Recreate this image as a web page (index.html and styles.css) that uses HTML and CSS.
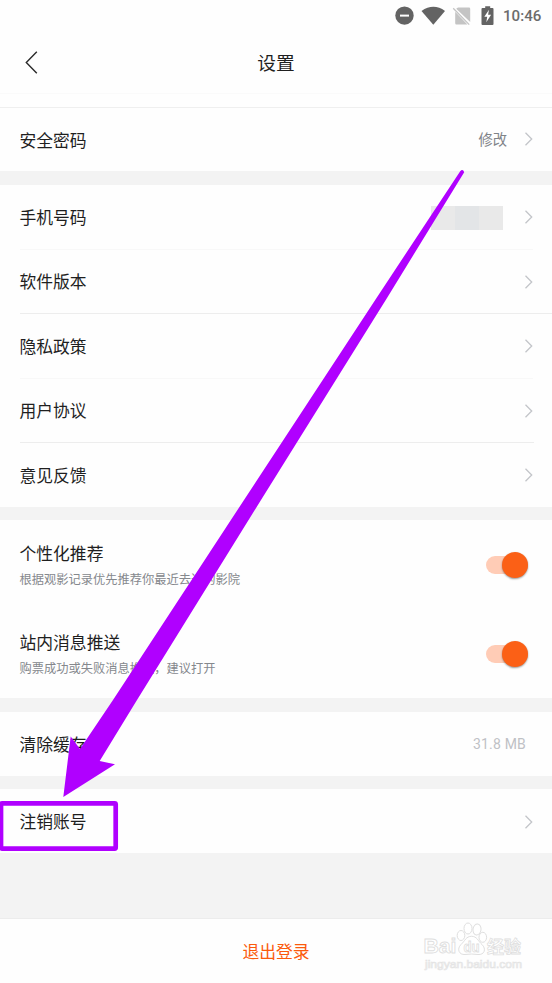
FILE: index.html
```html
<!DOCTYPE html>
<html lang="zh-CN">
<head>
<meta charset="utf-8">
<title>设置</title>
<link rel="stylesheet" href="styles.css">
</head>
<body>
<svg class="defs" width="0" height="0">
  <symbol id="chevron" viewBox="0 0 9 14"><path d="M1.500 .8 7.700 7 1.500 13.200" fill="none" stroke="#c3c5c9" stroke-width="1.3"/></symbol>
</svg>
<div class="screen">
  <header class="header">
    <div class="status">
      <svg class="status-icons" width="102" height="24" viewBox="0 0 102 24">
        <circle cx="9.500" cy="11.600" r="9.200" fill="#636363"/>
        <rect x="5" y="10.600" width="9" height="2" fill="#fff"/>
        <path d="M26.500 7.300Q38.500-.8 50 7.300L38.300 21.200Z" transform="translate(0 -.4)" fill="#636363"/>
        <path d="M63 3.500h11q1.200 0 1.200 1.200v13.200L61.200 4.800Z M60.200 7.800 72.400 20.400H61.400q-1.200 0-1.200-1.200Z" fill="#c4c4c4"/>
        <path d="M58.200 4.200 74.200 20.600" stroke="#c4c4c4" stroke-width="1.300"/>
        <path d="M90.200 2.200h5V4h2.300q1 0 1 1v15q0 1-1 1h-10q-1 0-1-1V5q0-1 1-1h2.700Z" fill="#636363"/>
        <path d="M94 5.700 89.300 12.800h2.900l-.9 5.500 4.800-7.600h-3Z" fill="#fff"/>
      </svg>
      <span class="time">10:46</span>
    </div>
    <div class="nav">
      <svg class="back" width="14" height="24" viewBox="0 0 14 24"><path d="M11.800 .8 1.300 11.500 11.800 22.200" fill="none" stroke="#2a2a2a" stroke-width="1.400"/></svg>
      <h1 class="title">设置</h1>
    </div>
  </header>

  <main class="content">
    <section class="group group-first">
      <div class="row"><span class="label">安全密码</span><span class="value">修改</span><svg class="chevron"><use href="#chevron"/></svg></div>
    </section>
    <section class="group group-links">
      <div class="row faint"><span class="label">手机号码</span><span class="masked"></span><svg class="chevron"><use href="#chevron"/></svg></div>
      <div class="row line-full"><span class="label">软件版本</span><svg class="chevron"><use href="#chevron"/></svg></div>
      <div class="row faint"><span class="label">隐私政策</span><svg class="chevron"><use href="#chevron"/></svg></div>
      <div class="row line"><span class="label">用户协议</span><svg class="chevron"><use href="#chevron"/></svg></div>
      <div class="row"><span class="label">意见反馈</span><svg class="chevron"><use href="#chevron"/></svg></div>
    </section>
    <section class="group group-switches">
      <div class="switch-row"><div class="texts"><div class="label">个性化推荐</div><div class="hint">根据观影记录优先推荐你最近去过的影院</div></div><div class="switch"><div class="knob"></div></div></div>
      <div class="switch-row"><div class="texts"><div class="label">站内消息推送</div><div class="hint">购票成功或失败消息推送，建议打开</div></div><div class="switch"><div class="knob"></div></div></div>
    </section>
    <section class="group group-cache">
      <div class="row"><span class="label">清除缓存</span><span class="size">31.8 MB</span></div>
    </section>
    <section class="group group-account">
      <div class="row"><span class="label">注销账号</span><svg class="chevron"><use href="#chevron"/></svg></div>
    </section>
  </main>

  <footer class="footer">退出登录</footer>

  <svg class="watermark" width="112" height="56" viewBox="0 0 112 56">
    <g fill="#fff" stroke="#dfdfdf" stroke-width="1">
      <ellipse cx="48" cy="10.500" rx="4" ry="5.500"/><ellipse cx="57" cy="11.500" rx="4" ry="5.500" transform="rotate(8 57 11.500)"/>
      <ellipse cx="41" cy="17.500" rx="3.800" ry="5"/><ellipse cx="62.800" cy="19.300" rx="3.800" ry="5"/>
      <path d="M51.500 18.300C46 18.300 45 23 41 26.500C36.500 31 39 37 45 36.500Q51.500 35.500 58 36.500C64.500 37 66.500 31 62 26.500C58 23 57 18.300 51.500 18.300Z"/>
    </g>
    <text class="wm-bai" x="3.500" y="35" textLength="33" lengthAdjust="spacingAndGlyphs">Bai</text>
    <text class="wm-du" x="43.500" y="33.500" textLength="16" lengthAdjust="spacingAndGlyphs">du</text>
    <text class="wm-cn" x="67" y="34.500" textLength="34">经验</text>
    <text class="wm-url" x="5" y="50" textLength="97" lengthAdjust="spacingAndGlyphs">jingyan.baidu.com</text>
  </svg>

  <svg class="annotation" width="552" height="983" viewBox="0 0 552 983">
    <path d="M460.200 171.200Q462.800 168.500 464.200 172.200L387 298 261 500 137 700 99.700 761 115 764.300 63.300 797 70.700 736.500 80 749 113 700 244 500 376.500 298Z" fill="#b000ff"/>
    <rect x="1" y="803.300" width="114.700" height="45.300" rx="1" fill="none" stroke="#b000ff" stroke-width="4.700"/>
  </svg>
</div>
</body>
</html>
```
FILE: styles.css
```css
* { box-sizing: border-box; }
body { margin: 0; background: #fff; font-family: "Noto Sans CJK SC", sans-serif; color: #1f1f1f; }
.defs { position: absolute; }
.screen { position: relative; width: 552px; height: 983px; overflow: hidden; display: flex; flex-direction: column; background: #f3f3f3; }
.header { height: 108px; background: #fefefe; border-bottom: 1px solid #efefef; }
.status { height: 32px; display: flex; justify-content: flex-end; align-items: center; padding-right: 10px; }
.status-icons { margin-right: 6px; }
.time { font: 500 15.100px/32px Roboto, sans-serif; color: #6c6c6c; width: 39px; white-space: nowrap; }
.nav { height: 62px; display: grid; grid-template-columns: 1fr auto 1fr; align-items: center; border-bottom: 1px solid #fafafa; }
.back { margin-left: 25px; }
.title { margin: 0; padding-bottom: 2px; font-size: 18.700px; line-height: 28px; font-weight: 400; }
.content { display: flex; flex-direction: column; }
.group { background: #fefefe; }
.group-first { height: 63px; margin-bottom: 14px; }
.group-links { height: 322px; margin-bottom: 13px; }
.group-switches { height: 178px; margin-bottom: 14px; }
.group-cache { height: 64px; margin-bottom: 13px; }
.group-account { height: 64px; margin-bottom: 65px; }
.row { height: 64.500px; margin-left: 19.500px; padding-right: 19px; display: flex; align-items: center; }
.group-first .row { height: 62px; }
.group-first .label { padding-top: 1px; }
.group-cache .row { height: 63px; }
.group-account .row { height: 65px; }
.group-account .label { padding-bottom: 2px; }
.label { font-size: 16.800px; line-height: 24px; margin-right: auto; white-space: nowrap; }
.group-links .label { padding-bottom: 1px; }
.value { font-size: 14.300px; line-height: 20px; color: #808388; margin-right: 17px; padding-bottom: 1px; }
.size { font: 14px/20px Roboto, sans-serif; letter-spacing: .2px; color: #bfc1c5; margin-right: 7px; padding-top: 1px; }
.chevron { width: 9px; height: 14px; flex: none; }
.faint { background: linear-gradient(#f8f8f8, #f8f8f8) left bottom / 513px 1px no-repeat; }
.line { background: linear-gradient(#ededed, #ededed) left bottom / 514px 1px no-repeat; }
.line-full { background: linear-gradient(#ededed, #ededed) left bottom / 100% 1px no-repeat; }
.masked { width: 72px; height: 24px; margin: 2px 21px 0 0; background: linear-gradient(90deg, #e9e9e9 24px, #e3e5e7 24px 48px, #e9e9e9 48px); }
.switch-row { height: 89px; padding: 0 24px 0 19.500px; display: flex; align-items: center; justify-content: space-between; }
.texts { padding-bottom: 1px; }
.hint { font-size: 12.250px; line-height: 18px; margin-top: 5px; color: #85888d; white-space: nowrap; }
.switch { width: 42px; height: 18px; border-radius: 9px; background: #ffccb6; display: flex; justify-content: flex-end; align-items: center; }
.knob { width: 26px; height: 26px; flex: none; border-radius: 50%; background: #fb6016; box-shadow: 0 1px 2px rgba(0, 0, 0, .4); }
.footer { flex: 1; background: #fefefe; border-top: 1px solid #ececec; text-align: center; font-size: 16.800px; line-height: 64px; color: #fb5a0c; }
.watermark { position: absolute; left: 420px; top: 918px; }
.wm-bai { font: 700 21px "Liberation Sans", sans-serif; fill: #fff; stroke: #dfdfdf; stroke-width: .9px; }
.wm-du { font: 700 14px "Liberation Sans", sans-serif; fill: #fff; stroke: #dfdfdf; stroke-width: .9px; }
.wm-cn { font: 700 17px "Noto Sans CJK SC", sans-serif; fill: #fff; stroke: #dfdfdf; stroke-width: .8px; }
.wm-url { font: 11px "Liberation Sans", sans-serif; fill: #fff; stroke: #e4e4e4; stroke-width: .7px; }
.annotation { position: absolute; left: 0; top: 0; }
```
